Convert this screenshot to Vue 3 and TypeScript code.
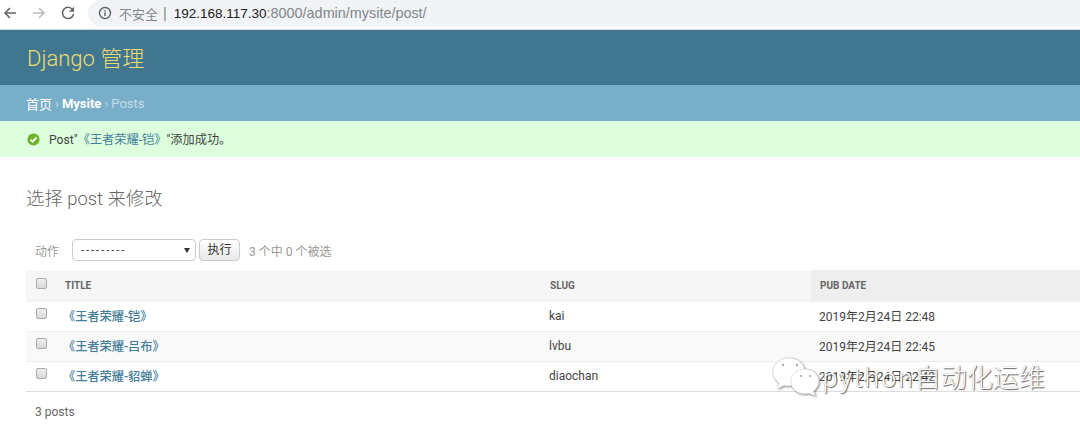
<template>
  <div class="page">
    <div class="browser-bar">
      <svg class="nav-icon" viewBox="0 0 16 16" aria-hidden="true"><path d="M14 8H3M8 3 3 8l5 5" /></svg>
      <svg class="nav-icon disabled" viewBox="0 0 16 16" aria-hidden="true"><path d="M2 8h11M8 3l5 5-5 5" /></svg>
      <svg class="nav-icon" viewBox="0 0 16 16" aria-hidden="true"><path d="M13 5.2A5.6 5.6 0 1 0 13.6 9" /><path class="fill" d="M14 1.8v5h-5z" /></svg>
      <div class="omnibox">
        <svg class="info" viewBox="0 0 14 14" aria-hidden="true">
          <circle cx="7" cy="7" r="5.5" />
          <path d="M7 6.3v3.6M7 4v1.4" />
        </svg>
        <span class="insecure">不安全</span>
        <span class="sep">|</span>
        <span class="host">192.168.117.30</span><span class="path">:8000/admin/mysite/post/</span>
      </div>
    </div>

    <header class="site-header">Django 管理</header>
    <nav class="crumbs">
      <span>首页</span><i>›</i><b>Mysite</b><i>›</i><em>Posts</em>
    </nav>
    <div class="message">
      <svg class="ok" viewBox="0 0 14 14" aria-hidden="true">
        <circle cx="7" cy="7" r="6.5" />
        <path d="M3.8 7.2 6 9.4l4.2-4.4" />
      </svg>
      <span>Post"<a>《王者荣耀-铠》</a>"添加成功。</span>
    </div>

    <main class="content">
      <h1>选择 post 来修改</h1>
      <div class="actions">
        <label>动作</label>
        <div class="select">
          <span>---------</span>
          <span class="caret"></span>
        </div>
        <div class="go">执行</div>
        <span class="count">3 个中 0 个被选</span>
      </div>

      <div class="table">
        <div class="row head">
          <div class="cell check"><span class="box"></span></div>
          <div class="cell title">TITLE</div>
          <div class="cell slug">SLUG</div>
          <div class="cell date sorted">PUB DATE</div>
        </div>
        <div v-for="(post, i) in posts" :key="post.slug" class="row" :class="{ alt: i === 1 }">
          <div class="cell check"><span class="box"></span></div>
          <div class="cell title"><a>{{ post.title }}</a></div>
          <div class="cell slug">{{ post.slug }}</div>
          <div class="cell date">{{ post.date }}</div>
        </div>
      </div>
      <p class="paginator">3 posts</p>
    </main>

    <div class="watermark">
      <svg class="wechat" viewBox="0 0 48 40" aria-hidden="true">
        <path d="M17 2C8 2 1 8 1 16c0 4.500 2.200 8.500 6 11l-1.500 6 6.500-3.500c1.600.4 3.300.6 5 .6 9 0 16-6 16-14.100S26 2 17 2z" />
        <path d="M33 13C25 13 19 18.500 19 25.500S25 38 33 38c1.500 0 2.800-.2 4-.5l7 2.500-2.500-5c3.500-2.300 5.500-5.700 5.500-9.500C47 18.500 41 13 33 13z" />
        <circle cx="11" cy="9" r="1.200" />
        <circle cx="25" cy="9" r="1.200" />
        <circle cx="29" cy="20" r="1.100" />
        <circle cx="38" cy="20" r="1.100" />
      </svg>
      <span class="latin">python</span><span>自动化运维</span>
    </div>
  </div>
</template>

<script setup lang="ts">
interface Post {
  title: string;
  slug: string;
  date: string;
}

const posts: Post[] = [
  { title: '《王者荣耀-铠》', slug: 'kai', date: '2019年2月24日 22:48' },
  { title: '《王者荣耀-吕布》', slug: 'lvbu', date: '2019年2月24日 22:45' },
  { title: '《王者荣耀-貂蝉》', slug: 'diaochan', date: '2019年2月24日 22:42' },
];
</script>

<style>
html,
body {
  margin: 0;
  background: #fff;
  overflow: hidden;
}
</style>

<style scoped>
.page {
  position: relative;
  width: 1080px;
  height: 427px;
  overflow: hidden;
  font-family: Roboto, "Noto Sans CJK SC", sans-serif;
  font-size: 13px;
  color: #666;
}

.browser-bar {
  display: flex;
  align-items: center;
  box-sizing: border-box;
  height: 30px;
  padding: 0 0 3px 2px;
  gap: 13px;
  border-bottom: 1px solid #d5dcdf;
  background: #fff;
}

.nav-icon {
  width: 16px;
  height: 16px;
  fill: none;
  stroke: #5f6368;
  stroke-width: 1.500;
  flex: none;
}

.nav-icon .fill {
  fill: #5f6368;
  stroke: none;
}

.nav-icon.disabled {
  stroke: #bbbec2;
}

.omnibox {
  display: flex;
  align-items: center;
  flex: 1;
  height: 26px;
  margin-left: -1px;
  padding-left: 10px;
  border-radius: 13px 0 0 13px;
  background: #f1f3f6;
  font-family: "Liberation Sans", "Noto Sans CJK SC", sans-serif;
  font-size: 14.400px;
  color: #80868b;
}

.info {
  width: 14px;
  height: 14px;
  margin-right: 7px;
  fill: none;
  stroke: #5f6368;
  stroke-width: 1.400;
}

.insecure {
  font-size: 13px;
}

.sep {
  margin: 0 7px 0 5px;
}

.host {
  color: #202124;
  font-size: 13.500px;
}

.site-header {
  height: 55px;
  padding-left: 27px;
  background: #417690;
  color: #ecdc72;
  font-size: 22px;
  font-weight: 300;
  line-height: 58px;
}

.crumbs {
  display: flex;
  align-items: center;
  height: 36px;
  padding-left: 26px;
  background: #79aec8;
  color: #fff;
  font-size: 13px;
}

.crumbs i {
  margin: 0 3px;
  font-style: normal;
  color: #c4dce8;
}

.crumbs b {
  font-weight: 700;
}

.crumbs em {
  font-style: normal;
  color: #c4dce8;
}

.message {
  display: flex;
  align-items: center;
  height: 36px;
  padding-left: 27px;
  background: #dfd;
  color: #444;
  font-size: 12.200px;
}

.message a {
  color: #447e9b;
}

.ok {
  width: 13px;
  height: 13px;
  margin-right: 9px;
}

.ok circle {
  fill: #6cb32d;
}

.ok path {
  fill: none;
  stroke: #fff;
  stroke-width: 2;
}

.content {
  padding: 30px 0 0 26px;
}

h1 {
  margin: 0 0 26px;
  height: 24px;
  font-size: 18.400px;
  font-weight: 300;
  line-height: 24px;
  color: #666;
}

.actions {
  display: flex;
  align-items: center;
  height: 26px;
  padding-left: 9px;
  font-size: 12px;
  color: #999;
}

.actions label {
  width: 37px;
}

.select {
  display: flex;
  align-items: center;
  justify-content: space-between;
  box-sizing: border-box;
  width: 124px;
  height: 22px;
  padding: 0 5px 0 8px;
  border: 1px solid #ccc;
  border-radius: 4px;
  background: #fff;
  color: #333;
  font-size: 11px;
  letter-spacing: 2px;
}

.caret {
  width: 0;
  height: 0;
  border-left: 3px solid transparent;
  border-right: 3px solid transparent;
  border-top: 5px solid #333;
}

.go {
  box-sizing: border-box;
  width: 41px;
  height: 22px;
  margin-left: 3px;
  border: 1px solid #ccc;
  border-radius: 4px;
  background: linear-gradient(#fff, #e8e8e8);
  color: #333;
  font-size: 12px;
  line-height: 20px;
  text-align: center;
}

.count {
  margin-left: 9px;
}

.table {
  margin-top: 7px;
  border-bottom: 1px solid #ddd;
}

.row {
  display: flex;
  height: 30px;
  border-top: 1px solid #eee;
  box-sizing: border-box;
  background: #fff;
  color: #444;
  font-size: 12px;
}

.row.alt {
  background: #f9f9f9;
}

.row.head {
  height: 31px;
  border-top: 0;
  background: #f6f6f6;
  color: #666;
  font-size: 10px;
  font-weight: 700;
}

.cell {
  display: flex;
  align-items: center;
  padding-bottom: 2px;
  box-sizing: border-box;
}

.head .cell {
  padding-bottom: 1px;
}

.cell.check {
  align-items: flex-start;
  width: 39px;
  padding: 6px 0 0 10px;
}

.head .cell.check {
  padding-top: 8px;
}

.box {
  box-sizing: border-box;
  width: 11px;
  height: 11px;
  border: 1px solid #aaa;
  border-radius: 2px;
  background: linear-gradient(#eee, #d8d8d8);
}

.title {
  width: 484px;
  flex: none;
}

.title a {
  margin-left: -2px;
  color: #447e9b;
  font-size: 12.200px;
  font-weight: 500;
}

.slug {
  width: 261px;
  flex: none;
}

.head .slug {
  width: 262px;
  padding-left: 1px;
}

.date {
  flex: 1;
  padding-left: 9px;
}

.row:not(.head) .date {
  padding-bottom: 3px;
}

.sorted {
  background: #eee;
}

.paginator {
  margin: 12px 0 0 9px;
  font-size: 12px;
  line-height: 16px;
  color: #666;
}

.watermark {
  position: absolute;
  left: 772px;
  top: 356px;
  display: flex;
  align-items: center;
  pointer-events: none;
}

.wechat {
  width: 48px;
  height: 40px;
  margin-right: 2px;
  filter: drop-shadow(1px 1px 1px rgba(60, 60, 60, 0.550));
}

.wechat path {
  fill: #fff;
  stroke: rgba(130, 130, 130, 0.400);
  stroke-width: 0.600;
}

.wechat circle {
  fill: #aaa;
}

.watermark span {
  font-family: "Noto Sans CJK SC", sans-serif;
  font-size: 26px;
  font-weight: 300;
  line-height: 40px;
  color: #fff;
  text-shadow: 1px 1px 1px rgba(50, 50, 50, 0.750), 0 0 1px rgba(90, 90, 90, 0.500);
}

.watermark .latin {
  letter-spacing: 1.500px;
}
</style>
